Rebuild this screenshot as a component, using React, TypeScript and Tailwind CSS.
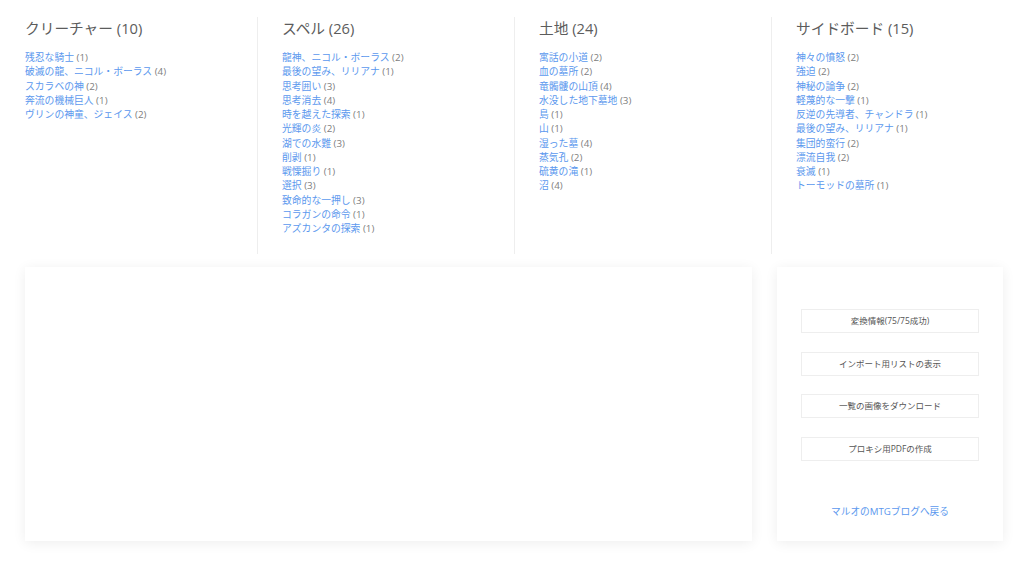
import React from 'react';

type Card = { name: string; count: number };
type Section = { title: string; total: number; cards: Card[] };

const sections: Section[] = [
  {
    title: 'クリーチャー',
    total: 10,
    cards: [
      { name: '残忍な騎士', count: 1 },
      { name: '破滅の龍、ニコル・ボーラス', count: 4 },
      { name: 'スカラベの神', count: 2 },
      { name: '奔流の機械巨人', count: 1 },
      { name: 'ヴリンの神童、ジェイス', count: 2 },
    ],
  },
  {
    title: 'スペル',
    total: 26,
    cards: [
      { name: '龍神、ニコル・ボーラス', count: 2 },
      { name: '最後の望み、リリアナ', count: 1 },
      { name: '思考囲い', count: 3 },
      { name: '思考消去', count: 4 },
      { name: '時を越えた探索', count: 1 },
      { name: '光輝の炎', count: 2 },
      { name: '湖での水難', count: 3 },
      { name: '削剥', count: 1 },
      { name: '戦慄掘り', count: 1 },
      { name: '選択', count: 3 },
      { name: '致命的な一押し', count: 3 },
      { name: 'コラガンの命令', count: 1 },
      { name: 'アズカンタの探索', count: 1 },
    ],
  },
  {
    title: '土地',
    total: 24,
    cards: [
      { name: '寓話の小道', count: 2 },
      { name: '血の墓所', count: 2 },
      { name: '竜髑髏の山頂', count: 4 },
      { name: '水没した地下墓地', count: 3 },
      { name: '島', count: 1 },
      { name: '山', count: 1 },
      { name: '湿った墓', count: 4 },
      { name: '蒸気孔', count: 2 },
      { name: '硫黄の滝', count: 1 },
      { name: '沼', count: 4 },
    ],
  },
  {
    title: 'サイドボード',
    total: 15,
    cards: [
      { name: '神々の憤怒', count: 2 },
      { name: '強迫', count: 2 },
      { name: '神秘の論争', count: 2 },
      { name: '軽蔑的な一撃', count: 1 },
      { name: '反逆の先導者、チャンドラ', count: 1 },
      { name: '最後の望み、リリアナ', count: 1 },
      { name: '集団的蛮行', count: 2 },
      { name: '漂流自我', count: 2 },
      { name: '衰滅', count: 1 },
      { name: 'トーモッドの墓所', count: 1 },
    ],
  },
];

const actions = ['変換情報(75/75成功)', 'インポート用リストの表示', '一覧の画像をダウンロード', 'プロキシ用PDFの作成'];

export default function App() {
  return (
    <div className="h-[570px] w-[1024px] overflow-hidden bg-white font-['Open_Sans','Noto_Sans_CJK_JP',sans-serif] text-[#555]">
      <div className="mt-[17px] flex h-[237px]">
        {sections.map((section, i) => (
          <div
            key={section.title}
            className={`w-[257px] shrink-0 ${i > 0 ? 'border-l border-[#eee] pl-[24px]' : 'pl-[25px]'}`}
          >
            <h3 className="mt-[1px] mb-[13px] text-[14.7px] leading-[20px] font-normal text-[#5c5c5c]">
              {section.title} ({section.total})
            </h3>
            <ul className="text-[9.8px] leading-[14.25px]">
              {section.cards.map((card) => (
                <li key={card.name}>
                  <a className="text-[#5b98ee]">{card.name}</a>
                  <span className="text-[#808080]"> ({card.count})</span>
                </li>
              ))}
            </ul>
          </div>
        ))}
      </div>

      <div className="mt-[13px] flex gap-[25px] pl-[25px]">
        <div className="h-[274px] w-[727px] bg-white shadow-[0_2px_12px_rgba(0,0,0,0.07)]" />
        <div className="flex h-[274px] w-[226px] flex-col items-center bg-white pt-[42px] shadow-[0_2px_12px_rgba(0,0,0,0.07)]">
          <div className="flex flex-col gap-[18.67px]">
            {actions.map((label) => (
              <button
                key={label}
                className="h-[24px] w-[178px] border border-[#eee] bg-white text-center text-[8.5px] leading-[22px] text-[#555]"
              >
                {label}
              </button>
            ))}
          </div>
          <a className="mt-[43px] text-[9.7px] leading-[16px] text-[#5b98ee]">マルオのMTGブログへ戻る</a>
        </div>
      </div>
    </div>
  );
}
